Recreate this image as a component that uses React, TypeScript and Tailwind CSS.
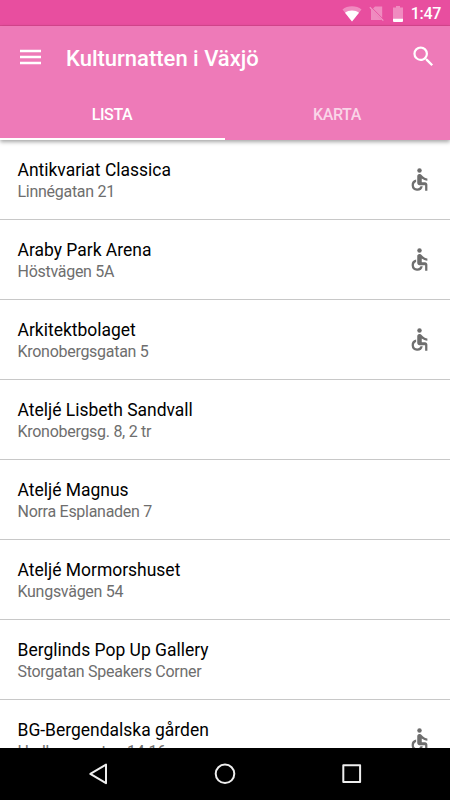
import { useState } from "react";
import { MdAccessible, MdSearch } from "react-icons/md";

interface Venue {
  name: string;
  address: string;
  accessible?: boolean;
}

type Tab = "lista" | "karta";

const venues: Venue[] = [
  { name: "Antikvariat Classica", address: "Linnégatan 21", accessible: true },
  { name: "Araby Park Arena", address: "Höstvägen 5A", accessible: true },
  { name: "Arkitektbolaget", address: "Kronobergsgatan 5", accessible: true },
  { name: "Ateljé Lisbeth Sandvall", address: "Kronobergsg. 8, 2 tr" },
  { name: "Ateljé Magnus", address: "Norra Esplanaden 7" },
  { name: "Ateljé Mormorshuset", address: "Kungsvägen 54" },
  { name: "Berglinds Pop Up Gallery", address: "Storgatan Speakers Corner" },
  { name: "BG-Bergendalska gården", address: "Hedbergsgatan 14-16", accessible: true },
];

const StatusBar = () => (
  <div className="flex h-[26px] shrink-0 items-center justify-end border-b border-[#d9468f] bg-[#e84e9f] pt-0.5 pr-[9px] text-white">
    <svg className="mr-[7px] h-4 w-5" viewBox="0 0 20 16" fill="currentColor">
      <path d="M10 15.5 0.5 3.5C3 1.5 6.3 0.3 10 0.3s7 1.2 9.5 3.2z" opacity=".35" />
      <path d="M10 15.5 3 6.7C5 5.2 7.3 4.4 10 4.4s5 .8 7 2.3z" />
    </svg>
    <svg className="mr-[8px] h-4 w-4" viewBox="0 0 16 16" fill="currentColor">
      <path d="M6 .5h7.2v11.2L4 2.5zM2 3.2 12.5 14H2z" opacity=".35" />
      <path d="M.8 1.2 14.3 14.6" stroke="currentColor" strokeWidth="1.2" opacity=".4" />
    </svg>
    <svg className="mr-[8px] h-4 w-[10px]" viewBox="0 0 10 16" fill="currentColor">
      <path d="M3 0h4v1.6h3V12H0V1.6h3z" opacity=".35" />
      <path d="M0 12.4h10V15q0 1-1 1H1q-1 0-1-1z" />
    </svg>
    <span className="text-[16px] leading-none font-medium tracking-[-0.3px]">1:47</span>
  </div>
);

interface AppBarProps {
  activeTab: Tab;
  setActiveTab: (tab: Tab) => void;
}

const AppBar = ({ activeTab, setActiveTab }: AppBarProps) => (
  <header className="relative z-10 flex h-[114px] shrink-0 flex-col bg-[#ee7ab8] text-white shadow-[0_2px_4px_rgba(0,0,0,0.35)]">
    <div className="flex h-[62px] items-center pr-[13.5px] pl-5">
      <button aria-label="Meny">
        <svg className="h-4 w-[21px]" viewBox="0 0 21 16" fill="none" stroke="currentColor" strokeWidth="2.3">
          <path d="M0 2h21M0 8h21M0 14h21" />
        </svg>
      </button>
      <h1 className="ml-[25px] flex-1 pt-[3px] text-[22px] leading-none font-medium">Kulturnatten i Växjö</h1>
      <button aria-label="Sök">
        <MdSearch className="mb-px size-[27px]" />
      </button>
    </div>
    <nav className="flex flex-1 text-[16px] font-medium tracking-[-0.4px]">
      <button
        onClick={() => setActiveTab("lista")}
        className={`flex-1 border-b-2 pt-[4px] pr-px ${activeTab === "lista" ? "border-white" : "border-transparent text-white/70"}`}
      >
        LISTA
      </button>
      <button
        onClick={() => setActiveTab("karta")}
        className={`flex-1 border-b-2 pt-[4px] pr-px ${activeTab === "karta" ? "border-white" : "border-transparent text-white/70"}`}
      >
        KARTA
      </button>
    </nav>
  </header>
);

const VenueRow = ({ name, address, accessible }: Venue) => (
  <li className="flex h-20 items-center justify-between border-b border-[#c8c8c8] pr-[17px] pl-[17.5px]">
    <div className="pt-0.5">
      <p className="text-[17.48px] leading-[22px] text-black">{name}</p>
      <p className="mt-px text-[16px] leading-[20px] tracking-[-0.28px] text-[#6e6e6e]">{address}</p>
    </div>
    {accessible && <MdAccessible className="size-[27px] text-[#6e6e6e]" />}
  </li>
);

const NavigationBar = () => (
  <div className="flex h-[52px] shrink-0 items-center justify-center gap-[101px] bg-black text-[#eeeeee]">
    <svg className="size-[26px]" viewBox="0 0 26 26" fill="none" stroke="currentColor" strokeWidth="2" strokeLinejoin="round">
      <path d="M21 3.6v18.6L5.3 12.9z" />
    </svg>
    <svg className="size-[26px]" viewBox="0 0 26 26" fill="none" stroke="currentColor" strokeWidth="2">
      <circle cx="13" cy="12.8" r="9.3" />
    </svg>
    <svg className="size-[26px]" viewBox="0 0 26 26" fill="none" stroke="currentColor" strokeWidth="2" strokeLinejoin="round">
      <path d="M4.3 4.3h16.8v16.8H4.3z" />
    </svg>
  </div>
);

export default function App() {
  const [activeTab, setActiveTab] = useState<Tab>("lista");

  return (
    <div className="flex h-screen flex-col overflow-hidden bg-white font-['Roboto',sans-serif]">
      <StatusBar />
      <AppBar activeTab={activeTab} setActiveTab={setActiveTab} />
      <main className="min-h-0 flex-1 overflow-hidden">
        {activeTab === "lista" && (
          <ul>
            {venues.map((venue) => (
              <VenueRow key={venue.name} {...venue} />
            ))}
          </ul>
        )}
      </main>
      <NavigationBar />
    </div>
  );
}
